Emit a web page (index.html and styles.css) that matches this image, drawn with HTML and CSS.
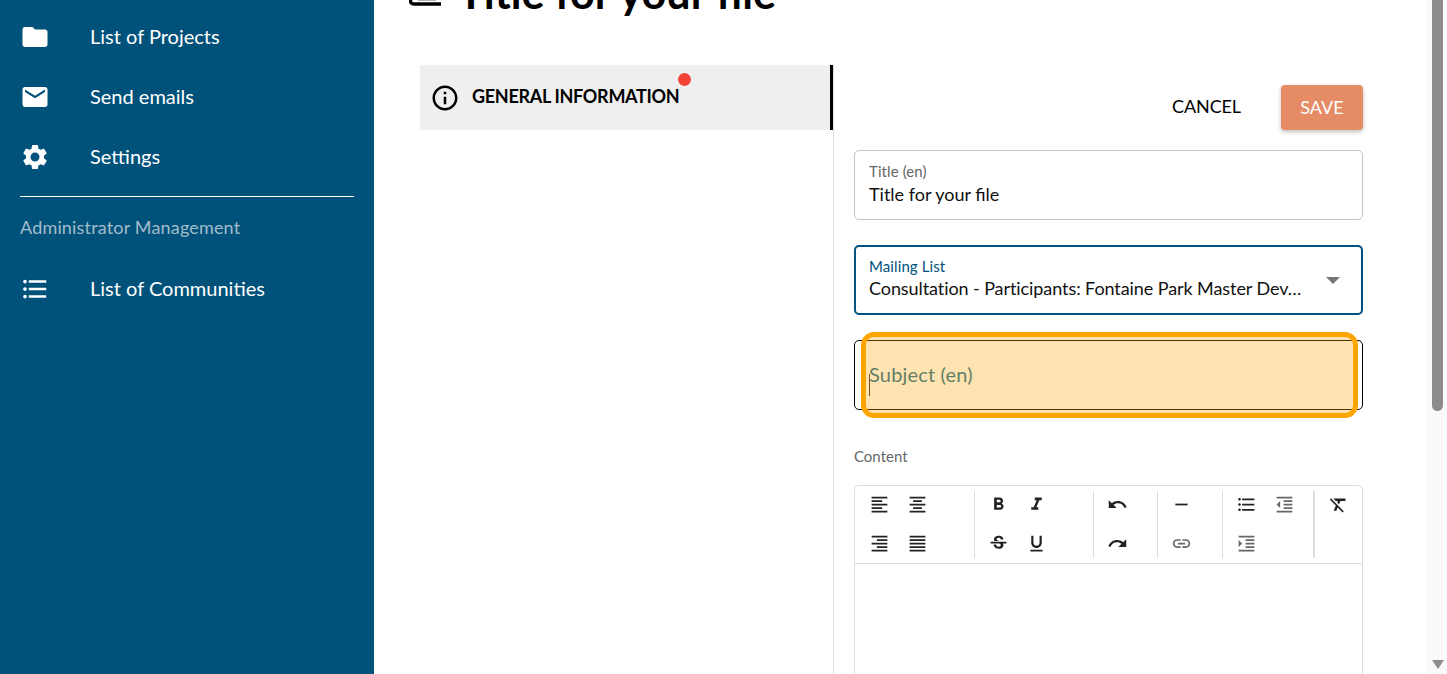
FILE: index.html
```html
<!DOCTYPE html>
<html lang="en">
<head>
    <meta charset="UTF-8">
    <meta name="viewport" content="width=device-width, initial-scale=1.0">
    <title>Title for your file</title>
    <link rel="stylesheet" href="styles.css">
</head>
<body>
<svg class="sprites" aria-hidden="true">
    <symbol id="i-left" viewBox="0 0 24 24"><path d="M15 15H3v2h12v-2zm0-8H3v2h12V7zM3 13h18v-2H3v2zm0 8h18v-2H3v2zM3 3v2h18V3H3z"/></symbol>
    <symbol id="i-center" viewBox="0 0 24 24"><path d="M7 15v2h10v-2H7zm-4 6h18v-2H3v2zm0-8h18v-2H3v2zm4-6v2h10V7H7zM3 3v2h18V3H3z"/></symbol>
    <symbol id="i-right" viewBox="0 0 24 24"><path d="M3 21h18v-2H3v2zm6-4h12v-2H9v2zm-6-4h18v-2H3v2zm6-4h12V7H9v2zM3 3v2h18V3H3z"/></symbol>
    <symbol id="i-justify" viewBox="0 0 24 24"><path d="M3 21h18v-2H3v2zm0-4h18v-2H3v2zm0-4h18v-2H3v2zm0-4h18V7H3v2zm0-6v2h18V3H3z"/></symbol>
    <symbol id="i-bold" viewBox="0 0 24 24"><path d="M15.6 10.79c.97-.67 1.65-1.77 1.65-2.79 0-2.26-1.75-4-4-4H7v14h7.04c2.09 0 3.71-1.7 3.71-3.79 0-1.52-.86-2.82-2.15-3.42zM10 6.5h3c.83 0 1.5.67 1.5 1.5s-.67 1.5-1.5 1.5h-3v-3zm3.5 9H10v-3h3.5c.83 0 1.5.67 1.5 1.5s-.67 1.5-1.5 1.5z"/></symbol>
    <symbol id="i-italic" viewBox="0 0 24 24"><path d="M10 4v3h2.21l-3.42 8H6v3h8v-3h-2.21l3.42-8H18V4z"/></symbol>
    <symbol id="i-strike" viewBox="0 0 24 24"><path d="M6.85 7.08C6.85 4.37 9.45 3 12.24 3c1.64 0 3 .49 3.9 1.28.77.65 1.46 1.73 1.46 3.24h-3.01c0-.31-.05-.59-.15-.85-.29-.86-1.2-1.28-2.25-1.28-1.86 0-2.34 1.02-2.34 1.7 0 .48.25.88.74 1.21.38.25.77.48 1.41.7H7.39c-.21-.34-.54-.89-.54-1.92zM21 12v-2H3v2h9.62c1.15.45 1.96.75 1.96 1.97 0 1-.81 1.67-2.28 1.67-1.54 0-2.93-.54-2.93-2.51H6.4c0 .55.08 1.13.24 1.58.81 2.29 3.29 3.3 5.67 3.3 2.27 0 5.3-.89 5.3-4.05 0-.3-.01-1.16-.48-1.94H21V12z"/></symbol>
    <symbol id="i-underline" viewBox="0 0 24 24"><path d="M12 17c3.31 0 6-2.69 6-6V3h-2.5v8c0 1.93-1.57 3.5-3.5 3.5S8.5 12.93 8.5 11V3H6v8c0 3.31 2.69 6 6 6zm-7 2v2h14v-2H5z"/></symbol>
    <symbol id="i-undo" viewBox="0 0 24 24"><path d="M12.5 8c-2.65 0-5.05.99-6.9 2.6L2 7v9h9l-3.62-3.62c1.39-1.16 3.16-1.88 5.12-1.88 3.54 0 6.55 2.31 7.6 5.5l2.37-.78C21.08 11.03 17.15 8 12.5 8z"/></symbol>
    <symbol id="i-redo" viewBox="0 0 24 24"><path d="M18.4 10.6C16.55 8.99 14.15 8 11.5 8c-4.65 0-8.58 3.03-9.96 7.22L3.9 16c1.05-3.19 4.05-5.5 7.6-5.5 1.95 0 3.73.72 5.12 1.88L13 16h9V7l-3.6 3.6z"/></symbol>
    <symbol id="i-hr" viewBox="0 0 24 24"><path d="M19 13H5v-2h14v2z"/></symbol>
    <symbol id="i-link" viewBox="0 0 24 24"><path d="M3.9 12c0-1.71 1.39-3.1 3.1-3.1h4V7H7c-2.76 0-5 2.24-5 5s2.24 5 5 5h4v-1.9H7c-1.71 0-3.1-1.39-3.1-3.1zM8 13h8v-2H8v2zm9-6h-4v1.9h4c1.71 0 3.1 1.39 3.1 3.1s-1.39 3.1-3.1 3.1h-4V17h4c2.76 0 5-2.24 5-5s-2.24-5-5-5z"/></symbol>
    <symbol id="i-list" viewBox="0 0 24 24"><path d="M4 10.5c-.83 0-1.5.67-1.5 1.5s.67 1.5 1.5 1.5 1.5-.67 1.5-1.5-.67-1.5-1.5-1.5zm0-6c-.83 0-1.5.67-1.5 1.5S3.17 7.5 4 7.5 5.5 6.83 5.5 6 4.83 4.5 4 4.5zm0 12c-.83 0-1.5.68-1.5 1.5s.68 1.5 1.5 1.5 1.5-.68 1.5-1.5-.67-1.5-1.5-1.5zM7 19h14v-2H7v2zm0-6h14v-2H7v2zm0-8v2h14V5H7z"/></symbol>
    <symbol id="i-outdent" viewBox="0 0 24 24"><path d="M11 17h10v-2H11v2zm-8-5l4 4V8l-4 4zm0 9h18v-2H3v2zM3 3v2h18V3H3zm8 6h10V7H11v2zm0 4h10v-2H11v2z"/></symbol>
    <symbol id="i-indent" viewBox="0 0 24 24"><path d="M3 21h18v-2H3v2zM3 8v8l4-4-4-4zm8 9h10v-2H11v2zM3 3v2h18V3H3zm8 6h10V7H11v2zm0 4h10v-2H11v2z"/></symbol>
    <symbol id="i-clear" viewBox="0 0 24 24"><path d="M3.27 5L2 6.27l6.97 6.97L6.5 19h3l1.57-3.66L16.73 21 18 19.73 3.55 5.27 3.27 5zM6 5v.18L8.82 8h2.4l-.72 1.68 2.1 2.1L14.21 8H20V5H6z"/></symbol>
</svg>

<div class="sidebar">
    <a class="nav-item">
        <svg class="nav-icon" viewBox="0 0 24 24"><path d="M10 4H4c-1.1 0-1.99.9-1.99 2L2 18c0 1.1.9 2 2 2h16c1.1 0 2-.9 2-2V8c0-1.1-.9-2-2-2h-8l-2-2z"/></svg>
        <span>List of Projects</span>
    </a>
    <a class="nav-item">
        <svg class="nav-icon" viewBox="0 0 24 24"><path d="M20 4H4c-1.1 0-1.99.9-1.99 2L2 18c0 1.1.9 2 2 2h16c1.1 0 2-.9 2-2V6c0-1.1-.9-2-2-2zm0 4l-8 5-8-5V6l8 5 8-5v2z"/></svg>
        <span>Send emails</span>
    </a>
    <a class="nav-item">
        <svg class="nav-icon" viewBox="0 0 24 24"><path d="M19.14 12.94c.04-.3.06-.61.06-.94 0-.32-.02-.64-.07-.94l2.03-1.58c.18-.14.23-.41.12-.61l-1.92-3.32c-.12-.22-.37-.29-.59-.22l-2.39.96c-.5-.38-1.03-.7-1.62-.94l-.36-2.54c-.04-.24-.24-.41-.48-.41h-3.84c-.24 0-.43.17-.47.41l-.36 2.54c-.59.24-1.13.57-1.62.94l-2.39-.96c-.22-.08-.47 0-.59.22L2.74 8.87c-.12.21-.08.47.12.61l2.03 1.58c-.05.3-.09.63-.09.94s.02.64.07.94l-2.03 1.58c-.18.14-.23.41-.12.61l1.92 3.32c.12.22.37.29.59.22l2.39-.96c.5.38 1.03.7 1.62.94l.36 2.54c.05.24.24.41.48.41h3.84c.24 0 .44-.17.47-.41l.36-2.54c.59-.24 1.13-.56 1.62-.94l2.39.96c.22.08.47 0 .59-.22l1.92-3.32c.12-.22.07-.47-.12-.61l-2.01-1.58zM12 15.6c-1.98 0-3.6-1.62-3.6-3.6s1.62-3.6 3.6-3.6 3.6 1.62 3.6 3.6-1.62 3.6-3.6 3.6z"/></svg>
        <span>Settings</span>
    </a>
    <hr class="nav-line">
    <div class="nav-title">Administrator Management</div>
    <a class="nav-item">
        <svg class="nav-icon" viewBox="0 0 24 24"><path d="M4 10.5c-.83 0-1.5.67-1.5 1.5s.67 1.5 1.5 1.5 1.5-.67 1.5-1.5-.67-1.5-1.5-1.5zm0-6c-.83 0-1.5.67-1.5 1.5S3.17 7.5 4 7.5 5.5 6.83 5.5 6 4.83 4.5 4 4.5zm0 12c-.83 0-1.5.68-1.5 1.5s.68 1.5 1.5 1.5 1.5-.68 1.5-1.5-.67-1.5-1.5-1.5zM7 19h14v-2H7v2zm0-6h14v-2H7v2zm0-8v2h14V5H7z"/></svg>
        <span>List of Communities</span>
    </a>
</div>

<div class="main">
    <div class="page-title">
        <svg class="title-icon" viewBox="0 0 32 32"><path d="M1.5 0v25a3 3 0 0 0 3 3h27.5" fill="none" stroke="#000" stroke-width="3.5"/><path d="M9 24h18" stroke="#999" stroke-width="1.5"/></svg>
        <h1>Title for your file</h1>
    </div>

    <div class="columns">
        <div class="tabs">
            <div class="tab">
                <svg class="tab-icon" viewBox="0 0 24 24"><path d="M11 7h2v2h-2zm0 4h2v6h-2zm1-9C6.48 2 2 6.48 2 12s4.48 10 10 10 10-4.48 10-10S17.52 2 12 2zm0 18c-4.41 0-8-3.59-8-8s3.59-8 8-8 8 3.59 8 8-3.59 8-8 8z"/></svg>
                <span class="tab-label">GENERAL INFORMATION<i class="dot"></i></span>
            </div>
        </div>

        <div class="form">
            <div class="actions">
                <a class="btn-cancel">CANCEL</a>
                <a class="btn-save">SAVE</a>
            </div>

            <div class="field field-title">
                <label>Title (en)</label>
                <div class="value">Title for your file</div>
            </div>

            <div class="field field-focus">
                <label>Mailing List</label>
                <div class="value">Consultation - Participants: Fontaine Park Master Dev…</div>
                <i class="arrow"></i>
            </div>

            <div class="field field-subject">
                <div class="placeholder">Subject (en)</div>
                <i class="caret"></i>
                <div class="highlight"></div>
            </div>

            <div class="content-label">Content</div>
            <div class="editor">
                <div class="toolbar">
                    <div class="group g1">
                        <svg class="tool"><use href="#i-left"/></svg>
                        <svg class="tool"><use href="#i-center"/></svg>
                        <svg class="tool"><use href="#i-right"/></svg>
                        <svg class="tool"><use href="#i-justify"/></svg>
                    </div>
                    <div class="group g2">
                        <svg class="tool"><use href="#i-bold"/></svg>
                        <svg class="tool"><use href="#i-italic"/></svg>
                        <svg class="tool"><use href="#i-strike"/></svg>
                        <svg class="tool"><use href="#i-underline"/></svg>
                    </div>
                    <div class="group g3">
                        <svg class="tool"><use href="#i-undo"/></svg>
                        <svg class="tool"><use href="#i-redo"/></svg>
                    </div>
                    <div class="group g4">
                        <svg class="tool"><use href="#i-hr"/></svg>
                        <svg class="tool grey"><use href="#i-link"/></svg>
                    </div>
                    <div class="group g5">
                        <svg class="tool"><use href="#i-list"/></svg>
                        <svg class="tool grey"><use href="#i-outdent"/></svg>
                        <svg class="tool grey"><use href="#i-indent"/></svg>
                    </div>
                    <div class="group g6">
                        <svg class="tool"><use href="#i-clear"/></svg>
                    </div>
                </div>
                <div class="editor-body"></div>
            </div>
        </div>
    </div>
</div>

<div class="scrollbar">
    <div class="thumb"></div>
    <i class="scroll-down"></i>
</div>
</body>
</html>
```

FILE: styles.css
```css
* {
    box-sizing: border-box;
}

html, body {
    height: 100%;
    overflow: hidden;
}

body {
    margin: 0;
    display: flex;
    font-family: Lato, "Noto Sans", sans-serif;
    color: #000;
    background: #fff;
}

.sprites {
    display: none;
}

/* sidebar */
.sidebar {
    width: 374px;
    flex: none;
    background: #00527a;
    color: #fff;
    padding: 7px 20px 0;
}

.nav-item {
    display: flex;
    align-items: center;
    height: 60px;
    font-size: 20px;
}

.nav-item span {
    margin-bottom: 2px;
}

.nav-icon {
    width: 30px;
    height: 30px;
    fill: #fff;
    margin-right: 40px;
}

.nav-line {
    margin: 9px 0 0;
    border: none;
    border-top: 1px solid #fff;
}

.nav-title {
    height: 62px;
    padding-top: 19px;
    font-size: 18px;
    line-height: 22px;
    letter-spacing: .17px;
    color: #a3bccb;
}

/* main */
.main {
    flex: 1;
    min-width: 0;
}

.page-title {
    display: flex;
    align-items: center;
    height: 65px;
    margin-top: -41px;
    padding-left: 35px;
}

.title-icon {
    width: 32px;
    height: 32px;
    margin-right: 17px;
}

h1 {
    margin: 0;
    font-size: 43.2px;
    font-weight: 700;
}

.columns {
    display: flex;
    padding-top: 41px;
    padding-left: 46px;
}

.tabs {
    width: 414px;
    flex: none;
    border-right: 1px solid #ddd;
    height: 700px;
}

.tab {
    display: flex;
    align-items: center;
    width: 413px;
    height: 65px;
    background: #efefef;
    border-right: 3px solid #000;
    padding-left: 10px;
}

.tab-icon {
    width: 30px;
    height: 30px;
    margin-right: 12px;
}

.tab-label {
    position: relative;
    margin-bottom: 4px;
    font-size: 18px;
    font-weight: 700;
    letter-spacing: -0.3px;
}

.dot {
    position: absolute;
    right: -12px;
    top: -12px;
    width: 13px;
    height: 13px;
    border-radius: 50%;
    background: #f44336;
}

.form {
    width: 509px;
    margin-left: 20px;
}

.actions {
    display: flex;
    justify-content: flex-end;
    align-items: center;
    height: 45px;
    margin-top: 20px;
    font-size: 18px;
}

.btn-cancel {
    margin-right: 40px;
    padding-bottom: 3px;
    letter-spacing: -.1px;
}

.btn-save {
    display: flex;
    align-items: center;
    justify-content: center;
    width: 82px;
    height: 45px;
    padding-bottom: 2px;
    border-radius: 4px;
    color: #fff;
    background: #e58c67;
    box-shadow: 0 2px 4px rgba(0, 0, 0, .25);
}

.field {
    position: relative;
    height: 70px;
    margin-top: 25px;
    padding: 12px 14px 0;
    border: 1px solid #c4c4c4;
    border-radius: 5px;
}

.actions + .field {
    margin-top: 20px;
}

.field label {
    display: block;
    font-size: 15px;
    line-height: 18px;
    letter-spacing: .1px;
    color: #666;
}

.field-title {
    padding-top: 11px;
}

.field-title .value {
    margin-top: 1px;
}

.value {
    font-size: 18px;
    line-height: 26px;
    white-space: nowrap;
    color: #111;
}

.field-focus {
    border: 2px solid #00527a;
    padding: 10px 13px 0;
}

.field-focus label {
    color: #00527a;
}

.field-focus .value {
    letter-spacing: -.08px;
}

.arrow {
    position: absolute;
    right: 21px;
    top: 30px;
    width: 0;
    height: 0;
    border: 7px solid transparent;
    border-top-color: #777;
    border-bottom: none;
}

.field-subject {
    border-color: #000;
    padding-top: 0;
    display: flex;
    align-items: center;
}

.placeholder {
    margin-bottom: 2px;
    font-size: 20px;
    letter-spacing: .17px;
    color: #1a6e92;
}

.caret {
    position: absolute;
    left: 14px;
    top: 33px;
    width: 1px;
    height: 22px;
    background: #333;
}

.highlight {
    position: absolute;
    left: 6px;
    top: -9px;
    width: 497px;
    height: 86px;
    border: 5px solid #ffa500;
    border-radius: 13px;
    background: rgba(255, 165, 0, .3);
}

.content-label {
    margin-top: 37px;
    font-size: 15px;
    line-height: 18px;
    color: #666;
}

.editor {
    margin-top: 20px;
    height: 300px;
    border: 1px solid #ddd;
    border-radius: 5px;
}

.toolbar {
    display: flex;
    height: 78px;
    padding-top: 5px;
    border-bottom: 1px solid #ddd;
}

.group {
    display: grid;
    flex: none;
    grid-template-columns: repeat(2, 38px);
    grid-auto-rows: 26px;
    row-gap: 13px;
    height: 67px;
    padding-left: 4px;
    border-right: 1px solid #ddd;
}

.g1 { width: 120px; padding-left: 5px; }
.g2 { width: 119px; }
.g3 { width: 64px; }
.g4 { width: 65px; }
.g5 { width: 92px; border-right-width: 2px; }
.g6 { border-right: none; }

.g3, .g4, .g6 {
    grid-template-columns: 38px;
}

.tool {
    width: 21px;
    height: 21px;
    justify-self: center;
    align-self: center;
    fill: #222;
}

.tool.grey {
    fill: #666;
}

/* page scrollbar */
.scrollbar {
    position: relative;
    width: 20px;
    flex: none;
    background: #fafafa;
    padding-left: 5px;
}

.thumb {
    width: 11px;
    height: 411px;
    background: #8c8c8c;
    border-radius: 0 0 6px 6px;
}

.scroll-down {
    position: absolute;
    left: 5px;
    bottom: 5px;
    border: 6px solid transparent;
    border-top: 9px solid #8c8c8c;
    border-bottom: none;
}
```
